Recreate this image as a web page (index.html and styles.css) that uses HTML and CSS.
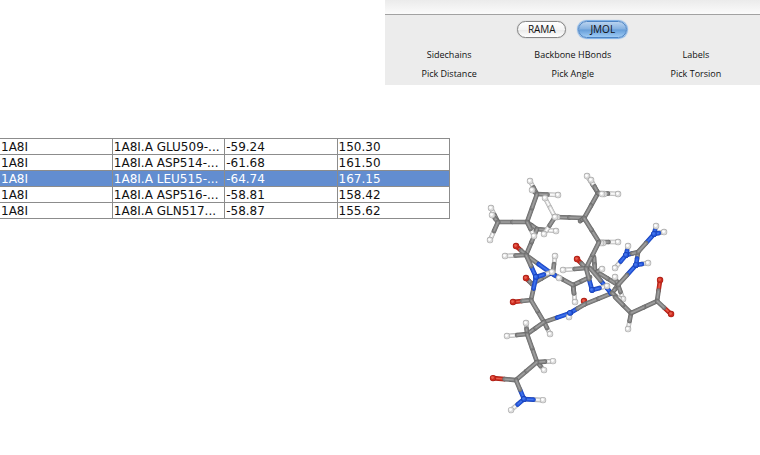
FILE: index.html
```html
<!DOCTYPE html>
<html lang="en">
<head>
<meta charset="utf-8">
<title>Structure viewer</title>
<link rel="stylesheet" href="styles.css">
</head>
<body>
<header class="toolbar">
  <div class="titlebar"></div>
  <div class="views">
    <button class="pill" type="button">RAMA</button>
    <button class="pill active" type="button">JMOL</button>
  </div>
  <div class="actions">
    <button type="button">Sidechains</button>
    <button type="button">Backbone HBonds</button>
    <button type="button">Labels</button>
    <button type="button">Pick Distance</button>
    <button type="button">Pick Angle</button>
    <button type="button">Pick Torsion</button>
  </div>
</header>
<main class="content">
  <div class="results">
    <table>
      <tbody>
        <tr><td>1A8I</td><td>1A8I.A GLU509-...</td><td>-59.24</td><td>150.30</td></tr>
        <tr><td>1A8I</td><td>1A8I.A ASP514-...</td><td>-61.68</td><td>161.50</td></tr>
        <tr class="selected"><td>1A8I</td><td>1A8I.A LEU515-...</td><td>-64.74</td><td>167.15</td></tr>
        <tr><td>1A8I</td><td>1A8I.A ASP516-...</td><td>-58.81</td><td>158.42</td></tr>
        <tr><td>1A8I</td><td>1A8I.A GLN517...</td><td>-58.87</td><td>155.62</td></tr>
      </tbody>
    </table>
  </div>
  <svg class="molecule" id="molecule" viewBox="450 85 310 369" aria-hidden="true"></svg>
</main>
<script src="molecule.js"></script>
</body>
</html>
```
FILE: styles.css
```css
* { box-sizing: border-box; }
body {
  margin: 0;
  background: #fff;
  color: #111;
  font-family: "Open Sans", "Noto Sans", sans-serif;
}
button {
  font: inherit;
  color: inherit;
  border: 0;
  padding: 0;
  background: none;
}
.toolbar {
  width: 49.4%;
  margin-left: auto;
  background: #ececec;
}
.titlebar {
  height: 15px;
  border-bottom: 1px solid #a2a2a2;
  background: linear-gradient(#ebebeb, #fbfbfb);
}
.views {
  display: flex;
  justify-content: center;
  gap: 12px;
  padding-top: 6px;
}
.pill {
  width: 49px;
  height: 17px;
  border: 1px solid #858585;
  border-radius: 9px;
  background: linear-gradient(#fff, #f4f4f4 50%, #e9e9e9 51%, #fff);
  box-shadow: 0 0 1px #999;
  font-size: 10px;
  line-height: 15px;
}
.pill.active {
  border-color: #4d84c4;
  background: linear-gradient(#b9d3ef, #83b0e0 48%, #659dd8 52%, #9dcaf4);
  box-shadow: 0 0 1px 1px #7aaee6;
}
.actions {
  display: grid;
  grid-template-columns: 129fr 118fr 128fr;
  grid-auto-rows: 19px;
  padding: 7px 0 2px;
  font-size: 9px;
}
.content {
  display: flex;
  align-items: flex-start;
}
.results {
  width: 59.2%;
  padding-top: 53px;
}
table {
  width: 100%;
  table-layout: fixed;
  border-collapse: collapse;
  font-family: "DejaVu Sans", sans-serif;
  font-size: 12px;
  line-height: 14px;
}
td {
  height: 16px;
  padding: 1px 0 0 1px;
  border: 1px solid #8c8c8c;
  white-space: nowrap;
  overflow: hidden;
}
td:first-child { border-left: 0; }
.selected {
  background: #628dd0;
  color: #fff;
}
.molecule {
  flex: 1;
  min-width: 0;
}
```
FILE: molecule.js
```js
// Tube shades, from the outer edge to the highlight.
const shades = {
  C: ["#686868", "#828282", "#a0a0a0"],
  H: ["#a9a9a9", "#dcdcdc", "#ffffff"],
  N: ["#1c44b8", "#2456dc", "#4576ea"],
  O: ["#a81e14", "#cc2c20", "#e8604f"]
};

// Each bond: x1, y1, element, x2, y2, element. Listed back to front.
const bonds = [
  [532,284,"C",526,278,"O"], [532,284,"C",551,273,"C"],
  [537,229,"C",527,222,"C"], [537,229,"C",556,231,"H"],
  [537,229,"C",526,255,"C"],
  [585,304,"C",584,301,"O"], [595,272,"C",594,257,"C"],
  [597,272,"C",618,285,"C"], [597,272,"C",602,269,"H"],
  [590,277,"C",573,285,"C"], [573,285,"C",574,294,"C"],
  [573,285,"C",575,302,"H"], [551,273,"C",573,285,"C"],
  [551,273,"N",526,255,"C"], [553,272,"C",555,256,"H"],
  [551,273,"N",559,278,"H"],
  [526,255,"C",516,246,"O"], [526,255,"C",505,256,"H"],
  [526,255,"C",536,277,"N"], [536,277,"N",552,272,"H"],
  [536,277,"N",531,300,"C"], [531,300,"C",513,302,"O"],
  [531,300,"C",544,322,"C"],
  [537,194,"C",530,181,"H"], [537,194,"C",532,190,"H"],
  [537,194,"C",558,195,"H"], [537,194,"C",527,222,"C"],
  [527,222,"C",498,222,"C"], [498,222,"C",491,208,"H"],
  [498,222,"C",492,215,"H"], [498,222,"C",490,240,"H"],
  [527,222,"C",534,236,"H"],
  [584,218,"C",555,217,"C"], [555,217,"H",545,198,"H"],
  [555,217,"C",544,234,"H"], [555,217,"H",557,217,"H"],
  [584,218,"C",580,221,"C"], [584,218,"C",598,193,"C"],
  [598,193,"C",587,176,"H"], [598,193,"C",591,180,"H"],
  [598,193,"C",618,194,"H"], [602,194,"H",604,194,"H"],
  [584,218,"C",599,242,"C"], [599,242,"C",618,242,"H"],
  [601,243,"H",603,243,"H"],
  [612,293,"C",585,304,"C"], [585,304,"C",570,313,"N"],
  [570,313,"N",544,322,"C"], [570,313,"N",569,317,"H"],
  [590,268,"C",611,293,"N"], [612,293,"C",618,285,"C"],
  [618,285,"C",615,277,"H"], [618,285,"C",623,299,"H"],
  [612,293,"C",619,299,"H"], [615,297,"C",631,313,"C"],
  [586,268,"C",577,259,"O"], [586,268,"C",563,270,"H"],
  [599,242,"C",586,268,"C"], [586,268,"C",592,290,"N"],
  [592,290,"N",607,286,"H"],
  [618,285,"C",636,265,"N"], [636,265,"N",648,263,"H"],
  [636,265,"N",638,252,"C"], [638,252,"C",626,255,"N"],
  [626,255,"N",628,246,"H"], [626,255,"N",615,268,"H"],
  [638,252,"C",654,234,"N"], [654,234,"N",656,226,"H"],
  [654,234,"N",664,232,"H"],
  [631,313,"C",628,329,"H"], [631,313,"C",657,301,"C"],
  [657,301,"C",660,280,"O"], [657,301,"C",671,314,"O"],
  [544,322,"C",550,334,"H"], [544,322,"C",527,334,"C"],
  [527,334,"C",526,323,"H"], [527,334,"C",507,336,"H"],
  [527,334,"C",537,362,"C"], [537,362,"C",544,370,"H"],
  [537,362,"C",553,361,"H"], [537,362,"C",516,380,"C"],
  [516,380,"C",493,378,"O"], [516,380,"C",524,399,"N"],
  [524,399,"N",511,410,"H"], [524,399,"N",543,400,"H"]
];

const svg = document.getElementById("molecule");

function add(name, attributes) {
  const node = document.createElementNS("http://www.w3.org/2000/svg", name);
  for (const key in attributes) node.setAttribute(key, attributes[key]);
  svg.appendChild(node);
}

function tube(x1, y1, x2, y2, element) {
  [4.6, 3.4, 1.3].forEach((width, i) => add("path", {
    d: `M${x1} ${y1}L${x2} ${y2}`,
    stroke: shades[element][i],
    "stroke-width": width,
    "stroke-linecap": i === 2 ? "butt" : "round"
  }));
}

function ball(x, y, element) {
  const radius = element === "N" ? 2.8 : 3.2;
  add("circle", { cx: x, cy: y, r: radius, fill: shades[element][0] });
  add("circle", { cx: x, cy: y, r: radius - 0.6, fill: shades[element][1] });
  add("circle", { cx: x - 0.5, cy: y - 0.5, r: 1.4, fill: shades[element][2] });
}

for (const [x1, y1, from, x2, y2, to] of bonds) {
  const mx = (x1 + x2) / 2;
  const my = (y1 + y2) / 2;
  tube(mx, my, x2, y2, to);
  tube(x1, y1, mx, my, from);
  if (to !== "C") ball(x2, y2, to);
  if (from !== "C") ball(x1, y1, from);
}
```
